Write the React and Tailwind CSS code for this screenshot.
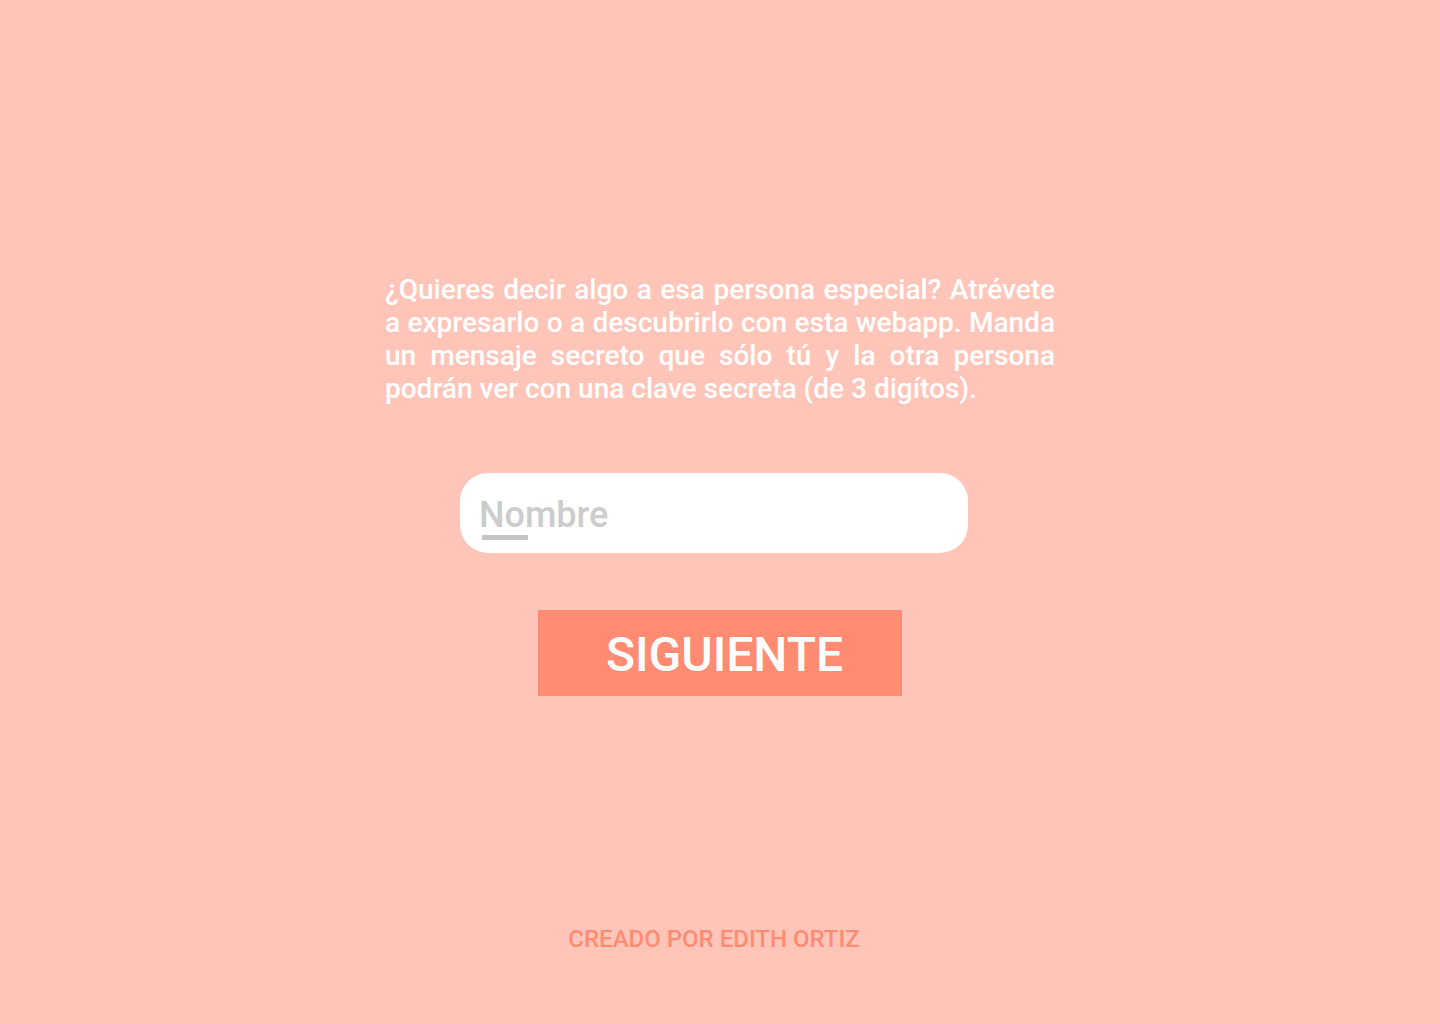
import React from "react";

const App = () => {
    return (
        <div
            className="min-h-[1024px] w-full bg-[#ffc5b9] flex flex-col items-center"
            style={{ fontFamily: "Roboto, 'Liberation Sans', sans-serif" }}
        >
            <p className="mt-[273px] w-[670px] text-white font-medium text-[28px] leading-[33px] text-justify">
                ¿Quieres decir algo a esa persona especial? Atrévete a expresarlo o a descubrirlo con esta webapp. Manda un mensaje secreto que sólo tú y la otra persona podrán ver con una clave secreta (de 3 digítos).
            </p>

            <div className="mt-[68px] ml-[-12px] relative w-[508px] h-[80px] bg-white rounded-[28px] flex items-center pl-[19px] pr-5">
                <input
                    type="text"
                    placeholder="Nombre"
                    className="w-full mt-[3px] bg-transparent outline-none text-[36px] font-medium text-[#555] placeholder:text-[#cccccc]"
                />
                <span className="absolute left-[22px] top-[62px] w-[46px] h-[5px] bg-[#c4c4c4]" />
            </div>

            <button className="mt-[57px] w-[364px] h-[86px] bg-[#ff8b73] text-white text-[48px] font-medium pl-[9px] pt-[3px]">
                SIGUIENTE
            </button>

            <p className="mt-[225px] ml-[-12px] text-[#ff8b73] text-[24px] font-medium">
                CREADO POR EDITH ORTIZ
            </p>
        </div>
    );
};

export default App;
